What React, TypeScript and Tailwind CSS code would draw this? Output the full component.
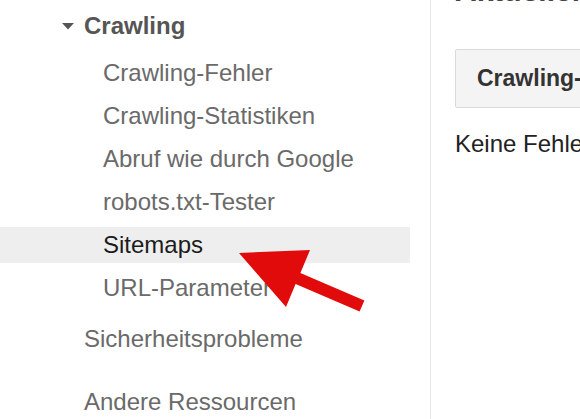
const items = [
  "Crawling-Fehler",
  "Crawling-Statistiken",
  "Abruf wie durch Google",
  "robots.txt-Tester",
  "Sitemaps",
  "URL-Parameter",
];

function Sidebar() {
  return (
    <div className="w-[431px] shrink-0 h-full border-r border-[#e6e6e6] pr-[20px]">
      <div className="h-[36px] mt-[8px] flex items-center pl-[62px] text-[#555] font-bold text-[24px]">
        <svg width="12" height="7" viewBox="0 0 12 7" className="mr-[10px]">
          <polygon points="0,0 12,0 6,6.5" fill="#555" />
        </svg>
        Crawling
      </div>
      <div className="mt-[11px] flex flex-col gap-[7px]">
        {items.map((label) => (
          <div
            key={label}
            className={
              label === "Sitemaps"
                ? "h-[36px] flex items-center pl-[103px] bg-[#eeeeee] text-[#1c1c1c]"
                : "h-[36px] flex items-center pl-[103px] text-[#6a6a6a]"
            }
          >
            {label}
          </div>
        ))}
      </div>
      <div className="h-[36px] mt-[15px] flex items-center pl-[84px] text-[#6a6a6a]">
        Sicherheitsprobleme
      </div>
      <div className="h-[36px] mt-[27px] flex items-center pl-[84px] text-[#6a6a6a]">
        Andere Ressourcen
      </div>
    </div>
  );
}

function Content() {
  return (
    <div className="flex-1 min-w-0 pl-[24px] whitespace-nowrap">
      <div className="-mt-[24px] h-[30px] text-[30px] leading-[30px] text-[#444] font-bold">
        Aktueller Status
      </div>
      <div className="mt-[43px] h-[59px] w-[400px] flex items-center pl-[21px] bg-[#f4f4f4] border border-[#dadada] rounded-[2px] text-[#333] font-bold text-[23px]">
        Crawling-Fehler
      </div>
      <div className="mt-[24px] text-[#222] text-[24px]">Keine Fehler gefunden</div>
    </div>
  );
}

export default function App() {
  return (
    <div
      className="relative w-[580px] h-[419px] overflow-hidden bg-white flex text-[24px] leading-none"
      style={{ fontFamily: '"Liberation Sans", Arial, sans-serif' }}
    >
      <Sidebar />
      <Content />
      <svg className="absolute left-0 top-0" width="580" height="419" viewBox="0 0 580 419">
        <polygon
          points="239,253 310,250 300.4,273 364.4,300.5 359.6,311.5 295.6,284 286,307"
          fill="#e20b0b"
        />
      </svg>
    </div>
  );
}
